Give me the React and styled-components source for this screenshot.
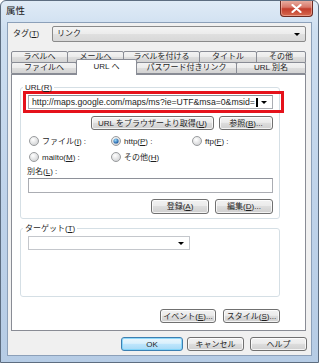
import React from 'react'
import styled, { createGlobalStyle } from 'styled-components'

const GlobalStyle = createGlobalStyle`
  body {
    margin: 0;
    background: #fff;
  }
  * {
    box-sizing: border-box;
  }
`

const Arrow = () => (
  <svg width="6" height="3" viewBox="0 0 6 3">
    <path d="M0 0h6L3 3z" fill="#000" />
  </svg>
)

const Radio = ({ checked }) => (
  <svg width="10" height="10" viewBox="0 0 10 10">
    <defs>
      <radialGradient id="rb" cx="40%" cy="35%" r="70%">
        <stop offset="0" stopColor="#ffffff" />
        <stop offset="1" stopColor="#cfd0d2" />
      </radialGradient>
      <radialGradient id="rd" cx="40%" cy="35%" r="65%">
        <stop offset="0" stopColor="#9adcfb" />
        <stop offset="1" stopColor="#1856a0" />
      </radialGradient>
    </defs>
    <circle cx="5" cy="5" r="4.5" fill="url(#rb)" stroke="#9a9c9e" />
    {checked && <circle cx="5" cy="5" r="2.6" fill="url(#rd)" />}
  </svg>
)

const topTabs = [
  { label: 'ラベルへ', w: 57 },
  { label: 'メールへ', w: 57 },
  { label: 'ラベルを付ける', w: 77 },
  { label: 'タイトル', w: 58 },
  { label: 'その他', w: 0 },
]

const frontTabs = [
  { label: 'ファイルへ', w: 66 },
  { label: 'URL へ', w: 61, active: true },
  { label: 'パスワード付きリンク', w: 101 },
  { label: 'URL 別名', w: 0 },
]

const App = () => {
  return (
    <>
      <GlobalStyle />
      <Window>
        <TitleBar>
          <Title>属性</Title>
          <CloseButton>
            <svg width="11" height="9" viewBox="0 0 11 9">
              <path d="M1.5 1l8 7M9.5 1l-8 7" stroke="#fff" strokeWidth="2.2" strokeLinecap="round" />
            </svg>
          </CloseButton>
        </TitleBar>
        <Client>
          <TagRow>
            <TagLabel>タグ(<u>T</u>)</TagLabel>
            <DropButton>
              <span>リンク</span>
              <Arrow />
            </DropButton>
          </TagRow>

          <TabRow>
            {topTabs.map((t) => (
              <Tab key={t.label} $w={t.w}>{t.label}</Tab>
            ))}
          </TabRow>
          <TabRow $front>
            {frontTabs.map((t) => (
              <Tab key={t.label} $w={t.w} $active={t.active}>{t.label}</Tab>
            ))}
          </TabRow>

          <Panel>
            <Group>
              <Legend>URL(<u>R</u>)</Legend>
              <Highlight>
                <EditCombo>
                  <UrlText>
                    http://maps.google.com/maps/ms?ie=UTF&amp;msa=0&amp;msid=
                    <Caret />
                  </UrlText>
                  <Arrow />
                </EditCombo>
              </Highlight>
              <ButtonRow $top={3}>
                <Button $w={123}><span>URL をブラウザーより取得(<u>U</u>)</span></Button>
                <Button $w={54}><span>参照(<u>B</u>)...</span></Button>
              </ButtonRow>
              <RadioGrid>
                <RadioItem><Radio /><span>ファイル(<u>I</u>) :</span></RadioItem>
                <RadioItem><Radio checked /><span>http(<u>P</u>) :</span></RadioItem>
                <RadioItem><Radio /><span>ftp(<u>F</u>) :</span></RadioItem>
                <RadioItem><Radio /><span>mailto(<u>M</u>) :</span></RadioItem>
                <RadioItem><Radio /><span>その他(<u>H</u>)</span></RadioItem>
              </RadioGrid>
              <FieldLabel>別名(<u>L</u>) :</FieldLabel>
              <TextBox />
              <ButtonRow $top={6} $gap={6}>
                <Button $w={58} $h={15}><span>登録(<u>A</u>)</span></Button>
                <Button $w={58} $h={15}><span>編集(<u>D</u>)...</span></Button>
              </ButtonRow>
            </Group>

            <Group $target>
              <Legend>ターゲット(<u>T</u>)</Legend>
              <TargetCombo>
                <span />
                <Arrow />
              </TargetCombo>
            </Group>

            <ButtonRow $top={12} $gap={7}>
              <Button $w={56}><span>イベント(<u>E</u>)...</span></Button>
              <Button $w={57}><span>スタイル(<u>S</u>)...</span></Button>
            </ButtonRow>
          </Panel>

          <Footer>
            <Button $w={62} $default>OK</Button>
            <Button $w={57}>キャンセル</Button>
            <Button $w={57}>ヘルプ</Button>
          </Footer>
        </Client>
      </Window>
    </>
  )
}

const Window = styled.div`
  width: 319px;
  height: 363px;
  display: flex;
  flex-direction: column;
  border: 1px solid #5d6d80;
  border-radius: 6px 6px 0 0;
  background: linear-gradient(180deg, #e0ebf6 0%, #cddef0 30px, #bfd3ea 55%, #b6cce5 100%);
  font-family: "Liberation Sans", "Noto Sans CJK JP", sans-serif;
  font-size: 8px;
  color: #1e1e1e;
  overflow: hidden;

  u {
    text-decoration: underline;
    text-underline-offset: 1px;
  }
`

const TitleBar = styled.div`
  height: 21px;
  display: flex;
  justify-content: space-between;
  align-items: flex-start;
`

const Title = styled.div`
  padding: 4px 0 0 5px;
  font-size: 9.5px;
  line-height: 12px;
  color: #1a1a1a;
`

const CloseButton = styled.div`
  width: 33px;
  height: 17px;
  margin: -1px 5px 0 0;
  display: flex;
  align-items: center;
  justify-content: center;
  border: 1px solid #6e2b22;
  border-top: none;
  border-radius: 0 0 4px 4px;
  background: linear-gradient(180deg, #eab3a6 0%, #d8786a 45%, #c33d2c 55%, #d66a4f 100%);
  box-shadow: inset 0 0 0 1px rgba(255, 210, 200, 0.45);
`

const Client = styled.div`
  flex: 1;
  margin: 0 6px 6px 6px;
  padding: 0 5px 0 3px;
  border: 1px solid #8ca0b9;
  background: #f0f0f0;
  display: flex;
  flex-direction: column;
`

const TagRow = styled.div`
  display: flex;
  align-items: center;
  height: 16px;
  margin-top: 3px;
`

const TagLabel = styled.div`
  width: 41px;
  padding-left: 2px;
  line-height: 12px;
`

const DropButton = styled.div`
  flex: 1;
  height: 16px;
  display: flex;
  align-items: center;
  justify-content: space-between;
  padding: 0 5px 0 4px;
  border: 1px solid #8a8a8a;
  border-radius: 2px;
  background: linear-gradient(180deg, #f4f4f4 0%, #ececec 50%, #e0e0e0 50%, #d8d8d8 100%);
  line-height: 12px;
`

const TabRow = styled.div`
  display: flex;
  align-items: flex-end;
  height: 12px;
  margin-top: ${(p) => (p.$front ? '-1px' : '9px')};
  position: relative;
  z-index: ${(p) => (p.$front ? 2 : 1)};
`

const Tab = styled.div`
  ${(p) => (p.$w ? `width: ${p.$w}px;` : 'flex: 1;')}
  height: ${(p) => (p.$active ? '16px' : '12px')};
  margin-bottom: ${(p) => (p.$active ? '-1px' : '0')};
  position: relative;
  z-index: ${(p) => (p.$active ? 3 : 1)};
  & + & {
    margin-left: -1px;
  }
  border: 1px solid #898c95;
  border-bottom: ${(p) => (p.$active ? 'none' : '1px solid #898c95')};
  border-radius: 2px 2px 0 0;
  background: ${(p) =>
    p.$active
      ? '#fff'
      : 'linear-gradient(180deg, #f3f3f3 0%, #ebebeb 50%, #dedede 50%, #d3d3d3 100%)'};
  text-align: center;
  line-height: ${(p) => (p.$active ? '13px' : '10px')};
  white-space: nowrap;
`

const Panel = styled.div`
  height: 257px;
  padding: 8px 25px 0 8px;
  border: 1px solid #898c95;
  background: #fff;
  position: relative;
  z-index: 1;
`

const Group = styled.fieldset`
  margin: ${(p) => (p.$target ? '5px 0 0 0' : '0')};
  padding: ${(p) => (p.$target ? '0 6px 46px 7px' : '0 6px 4px 7px')};
  min-width: 0;
  border: 1px solid #d5dfe5;
  border-radius: 3px;
`

const Legend = styled.legend`
  margin-left: -5px;
  padding: 0 2px;
  line-height: 9px;
  font-size: 8px;
`

const Highlight = styled.div`
  height: 22px;
  margin: -1px -11px 0 -5px;
  padding: 1px 8px 1px 2px;
  border: 3px solid #e5121b;
`

const EditCombo = styled.div`
  height: 14px;
  display: flex;
  align-items: center;
  justify-content: space-between;
  padding: 0 5px 0 3px;
  border: 1px solid #abadb3;
  border-top-color: #8a8d94;
  background: #fff;
`

const UrlText = styled.span`
  display: flex;
  align-items: center;
  font-size: 8.7px;
  line-height: 11px;
  white-space: nowrap;
`

const Caret = styled.span`
  display: inline-block;
  width: 2px;
  height: 9px;
  margin-left: 1px;
  background: #000;
`

const ButtonRow = styled.div`
  display: flex;
  justify-content: flex-end;
  gap: ${(p) => p.$gap || 5}px;
  margin-top: ${(p) => p.$top}px;
`

const Button = styled.div`
  width: ${(p) => p.$w}px;
  height: ${(p) => p.$h || 14}px;
  display: flex;
  align-items: center;
  justify-content: center;
  border: 1px solid ${(p) => (p.$default ? '#3c7fb1' : '#707070')};
  border-radius: 3px;
  background: ${(p) =>
    p.$default
      ? 'linear-gradient(180deg, #eaf6fd 0%, #d9f0fc 45%, #bee6fd 50%, #a7d9f5 100%)'
      : 'linear-gradient(180deg, #f2f2f2 0%, #ebebeb 45%, #dddddd 50%, #cfcfcf 100%)'};
  box-shadow: inset 0 0 0 1px ${(p) => (p.$default ? 'rgba(120, 210, 250, 0.8)' : 'rgba(255, 255, 255, 0.75)')};
  line-height: 11px;
  white-space: nowrap;
`

const RadioGrid = styled.div`
  display: grid;
  grid-template-columns: 82px 81px 1fr;
  grid-auto-rows: 16px;
  margin-top: 3px;
  padding-left: 1px;
`

const RadioItem = styled.label`
  display: flex;
  align-items: center;
  gap: 3px;
  line-height: 11px;
  white-space: nowrap;
`

const FieldLabel = styled.div`
  margin: 2px 0 0 -1px;
  line-height: 10px;
`

const TextBox = styled.div`
  height: 15px;
  margin-top: 1px;
  border: 1px solid #abadb3;
  border-top-color: #8e9199;
  background: #fff;
`

const TargetCombo = styled(EditCombo)`
  width: 162px;
  margin-top: 3px;
  border-color: #c4c7cc;
`

const Footer = styled.div`
  display: flex;
  justify-content: flex-end;
  gap: 4px;
  margin: 6px -1px 0 0;
  ${Button}:nth-child(3) {
    margin-left: 2px;
  }
`

export default App
